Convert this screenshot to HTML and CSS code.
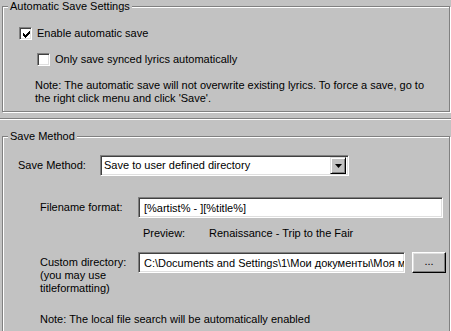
FILE: index.html
```html
<!DOCTYPE html>
<html lang="en">
<head>
  <meta charset="UTF-8">
  <meta name="viewport" content="width=device-width, initial-scale=1.0">
  <title>Lyrics Save Settings</title>
  <link rel="stylesheet" href="styles.css">
</head>
<body>
  <fieldset class="group group-auto">
    <legend>Automatic Save Settings</legend>
    <div class="check-row">
      <span class="check">
        <svg width="7" height="7" viewBox="0 0 7 7"><path d="M0 2h1v1h1v1h1v-1h1v-1h1v-1h1v-1h1v3h-1v1h-1v1h-1v1h-1v1h-1v-1h-1v-1h-1z" fill="#000"/></svg>
      </span>
      <span>Enable automatic save</span>
    </div>
    <div class="check-row sub">
      <span class="check"></span>
      <span>Only save synced lyrics automatically</span>
    </div>
    <p class="note">Note: The automatic save will not overwrite existing lyrics. To force a save, go to<br>the right click menu and click 'Save'.</p>
  </fieldset>

  <div class="separator"></div>

  <fieldset class="group group-method">
    <legend>Save Method</legend>
    <div class="method-row">
      <span class="method-label">Save Method:</span>
      <div class="combo">
        <span class="combo-text">Save to user defined directory</span>
        <span class="combo-btn">
          <svg width="7" height="4" viewBox="0 0 7 4"><path d="M0 0h7l-3.5 4z" fill="#000"/></svg>
        </span>
      </div>
    </div>

    <div class="field-row">
      <span class="field-label">Filename format:</span>
      <div class="edit edit-format">[%artist% - ][%title%]</div>
    </div>

    <div class="preview-row">
      <span class="preview-label">Preview:</span>
      <span>Renaissance - Trip to the Fair</span>
    </div>

    <div class="field-row dir-row">
      <span class="field-label">Custom directory:<br>(you may use<br>titleformatting)</span>
      <div class="edit edit-dir">C:\Documents and Settings\1\Мои документы\Моя м</div>
      <button class="browse" type="button">...</button>
    </div>

    <p class="note note-search">Note: The local file search will be automatically enabled</p>
  </fieldset>
</body>
</html>
```

FILE: styles.css
```css
html, body {
  overflow: hidden;
}

body {
  margin: 0;
  background: #c2c2c2;
  font-family: 'Liberation Sans', Arial, sans-serif;
  font-size: 11px;
  line-height: 13px;
  color: #000;
}

/* etched group boxes */
.group {
  margin: 0 1px 0 2px;
  padding: 0;
  min-width: 0;
  border: 1px solid #808080;
  box-shadow: 1px 1px 0 #fff, inset 1px 1px 0 #fff;
}

.group legend {
  margin-left: 5px;
  padding: 0 2px;
  background: #c2c2c2;
  line-height: 13px;
}

.group-method {
  margin-top: 10px;
  padding-bottom: 30px;
}

.separator {
  margin-top: 6px;
  border-top: 1px solid #808080;
  border-bottom: 1px solid #fff;
}

/* checkboxes */
.check-row {
  display: flex;
  align-items: center;
  gap: 5px;
  height: 13px;
  margin-top: 14px;
  padding-left: 16px;
  white-space: nowrap;
}

.check-row.sub {
  margin-top: 13px;
  padding-left: 34px;
}

.check {
  box-sizing: border-box;
  width: 13px;
  height: 13px;
  flex: none;
  display: flex;
  align-items: center;
  justify-content: center;
  background: #fff;
  border: 1px solid;
  border-color: #808080 #fff #fff #808080;
  box-shadow: inset 1px 1px 0 #404040, inset -1px -1px 0 #dfdfdf;
}

.check svg {
  display: block;
  margin: 1px 0 0 1px;
}

.note {
  margin: 13px 0 6px 32px;
  white-space: nowrap;
}

/* sunken fields */
.combo,
.edit {
  box-sizing: border-box;
  height: 21px;
  background: #fff;
  border: 1px solid;
  border-color: #808080 #fff #fff #808080;
  box-shadow: inset 1px 1px 0 #404040, inset -1px -1px 0 #dfdfdf;
  white-space: nowrap;
  overflow: hidden;
}

.method-row {
  display: flex;
  align-items: center;
  margin-top: 12px;
  padding-left: 15px;
}

.method-label {
  width: 82px;
  flex: none;
}

.combo {
  width: 249px;
  display: flex;
  align-items: center;
  padding: 2px;
}

.combo-text {
  flex: 1;
  padding-left: 1px;
}

.combo-btn {
  box-sizing: border-box;
  width: 16px;
  height: 17px;
  display: flex;
  align-items: center;
  justify-content: center;
  background: #c2c2c2;
  border: 1px solid;
  border-color: #dfdfdf #000 #000 #dfdfdf;
  box-shadow: inset 1px 1px 0 #fff, inset -1px -1px 0 #808080;
}

.field-row {
  display: flex;
  align-items: center;
  margin-top: 21px;
  padding-left: 37px;
}

.field-label {
  width: 98px;
  flex: none;
  white-space: nowrap;
}

.edit {
  padding: 2px 5px;
  line-height: 17px;
}

.edit-format {
  width: 305px;
}

.preview-row {
  display: flex;
  margin-top: 9px;
  padding-left: 140px;
  white-space: nowrap;
}

.preview-label {
  width: 66px;
  flex: none;
}

.dir-row {
  align-items: flex-start;
  margin-top: 12px;
}

.dir-row .field-label {
  padding-top: 4px;
}

.edit-dir {
  width: 267px;
  flex: none;
}

.browse {
  box-sizing: border-box;
  width: 34px;
  height: 21px;
  margin-left: 7px;
  padding: 0 0 2px;
  background: #c2c2c2;
  border: 1px solid;
  border-color: #fff #000 #000 #fff;
  box-shadow: inset -1px -1px 0 #808080, inset 1px 1px 0 #dfdfdf;
  font: inherit;
  line-height: 13px;
  color: #000;
}

.note-search {
  margin: 18px 0 0 37px;
}
```
